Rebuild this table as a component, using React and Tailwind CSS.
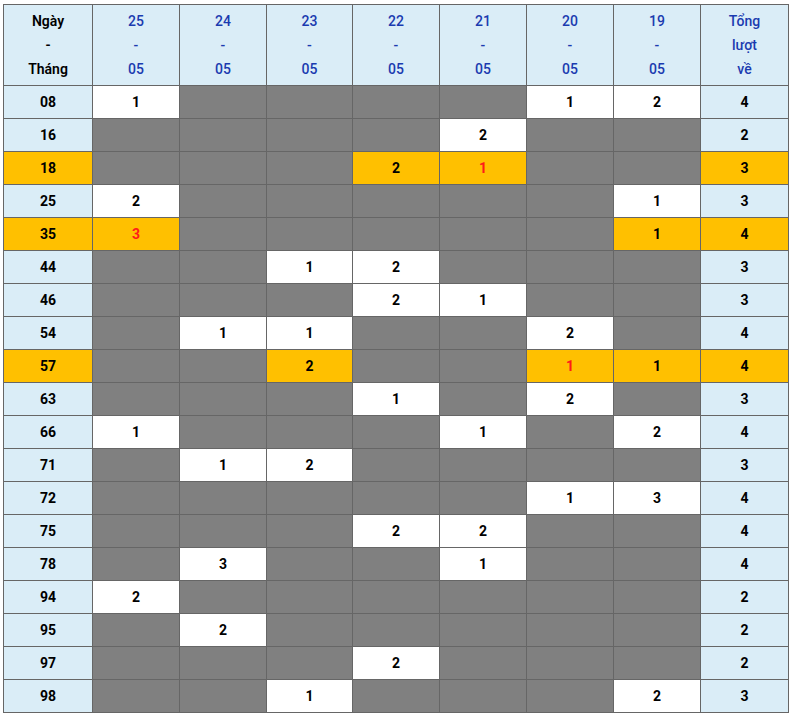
const DAYS = ["25", "24", "23", "22", "21", "20", "19"];

// cell values: null = grey, number = white, "r" suffix marks red text
const ROWS = [
  { n: "08", gold: false, v: [1, null, null, null, null, 1, 2], total: 4 },
  { n: "16", gold: false, v: [null, null, null, null, 2, null, null], total: 2 },
  { n: "18", gold: true, v: [null, null, null, 2, "1r", null, null], total: 3 },
  { n: "25", gold: false, v: [2, null, null, null, null, null, 1], total: 3 },
  { n: "35", gold: true, v: ["3r", null, null, null, null, null, 1], total: 4 },
  { n: "44", gold: false, v: [null, null, 1, 2, null, null, null], total: 3 },
  { n: "46", gold: false, v: [null, null, null, 2, 1, null, null], total: 3 },
  { n: "54", gold: false, v: [null, 1, 1, null, null, 2, null], total: 4 },
  { n: "57", gold: true, v: [null, null, 2, null, null, "1r", 1], total: 4 },
  { n: "63", gold: false, v: [null, null, null, 1, null, 2, null], total: 3 },
  { n: "66", gold: false, v: [1, null, null, null, 1, null, 2], total: 4 },
  { n: "71", gold: false, v: [null, 1, 2, null, null, null, null], total: 3 },
  { n: "72", gold: false, v: [null, null, null, null, null, 1, 3], total: 4 },
  { n: "75", gold: false, v: [null, null, null, 2, 2, null, null], total: 4 },
  { n: "78", gold: false, v: [null, 3, null, null, 1, null, null], total: 4 },
  { n: "94", gold: false, v: [2, null, null, null, null, null, null], total: 2 },
  { n: "95", gold: false, v: [null, 2, null, null, null, null, null], total: 2 },
  { n: "97", gold: false, v: [null, null, null, 2, null, null, null], total: 2 },
  { n: "98", gold: false, v: [null, null, 1, null, null, null, 2], total: 3 },
];

const WIDTHS = ["w-[89px]", "w-[87px]", "w-[87px]", "w-[86px]", "w-[87px]", "w-[87px]", "w-[87px]", "w-[87px]", "w-[88px]"];

function Cell({ value, gold }) {
  if (value === null) {
    return <td className="border border-[#666] bg-[#808080]" />;
  }
  const red = typeof value === "string";
  const text = red ? value.replace("r", "") : value;
  return (
    <td
      className={
        "border border-[#666] text-center " +
        (gold ? "bg-[#ffc000] " : "bg-white ") +
        (red ? "text-[#ff1a1a]" : "text-black")
      }
    >
      {text}
    </td>
  );
}

export default function App() {
  return (
    <div className="w-[791px] h-[716px] bg-white pt-[4px] pl-[3px]">
      <table
        className="table-fixed border-collapse w-[785px] text-[14px] font-bold"
        style={{ fontFamily: "Roboto, 'Liberation Sans', sans-serif" }}
      >
        <colgroup>
          {WIDTHS.map((w, i) => (
            <col key={i} className={w} />
          ))}
        </colgroup>
        <thead>
          <tr className="h-[81px]">
            <th className="border border-[#666] bg-[#daedf7] text-black font-semibold leading-[24px]">
              <div>Ngày</div>
              <div>-</div>
              <div>Tháng</div>
            </th>
            {DAYS.map((d) => (
              <th
                key={d}
                className="border border-[#666] bg-[#daedf7] text-[#1a3bb0] font-medium leading-[24px]"
              >
                <div>{d}</div>
                <div>-</div>
                <div>05</div>
              </th>
            ))}
            <th className="border border-[#666] bg-[#daedf7] text-[#1a3bb0] font-medium leading-[24px]">
              <div>Tổng</div>
              <div>lượt</div>
              <div>về</div>
            </th>
          </tr>
        </thead>
        <tbody>
          {ROWS.map((r) => (
            <tr key={r.n} className="h-[33px]">
              <td
                className={
                  "border border-[#666] text-center text-black " +
                  (r.gold ? "bg-[#ffc000]" : "bg-[#daedf7]")
                }
              >
                {r.n}
              </td>
              {r.v.map((v, i) => (
                <Cell key={i} value={v} gold={r.gold} />
              ))}
              <td
                className={
                  "border border-[#666] text-center text-black " +
                  (r.gold ? "bg-[#ffc000]" : "bg-[#daedf7]")
                }
              >
                {r.total}
              </td>
            </tr>
          ))}
        </tbody>
      </table>
    </div>
  );
}
